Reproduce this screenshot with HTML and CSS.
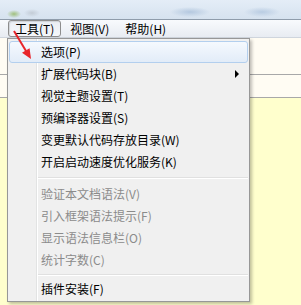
FILE: index.html
```html
<!DOCTYPE html>
<html lang="zh-CN">
<head>
  <meta charset="UTF-8">
  <title>工具菜单</title>
  <link rel="stylesheet" href="styles.css">
</head>
<body>

  <div class="titlebar"></div>

  <div class="menubar">
    <span class="bar-item pressed">工具(T)</span>
    <span class="bar-item">视图(V)</span>
    <span class="bar-item">帮助(H)</span>
  </div>

  <div class="editor">
    <div class="line first"></div>
    <div class="line second"></div>
    <div class="rest"></div>
  </div>

  <!-- 工具メニュー -->
  <div class="menu">
    <div class="item hover">选项(P)</div>
    <div class="item">扩展代码块(B)<span class="sub"></span></div>
    <div class="item">视觉主题设置(T)</div>
    <div class="item">预编译器设置(S)</div>
    <div class="item">变更默认代码存放目录(W)</div>
    <div class="item">开启启动速度优化服务(K)</div>
    <div class="sep"></div>
    <div class="item disabled">验证本文档语法(V)</div>
    <div class="item disabled">引入框架语法提示(F)</div>
    <div class="item disabled">显示语法信息栏(O)</div>
    <div class="item disabled">统计字数(C)</div>
    <div class="sep short"></div>
    <div class="item">插件安装(F)</div>
  </div>

  <svg class="arrow" width="40" height="64" viewBox="0 0 40 64">
    <line x1="14" y1="31" x2="26" y2="51" stroke="#e8262b" stroke-width="2"/>
    <polygon points="31,59 22,52.8 29.6,48.2" fill="#e8262b"/>
  </svg>

</body>
</html>
```

FILE: styles.css
```css
body {
  margin: 0;
  width: 301px;
  height: 305px;
  overflow: hidden;
  position: relative;
  font-family: "Noto Sans CJK SC", "Noto Sans", sans-serif;
  font-size: 12px;
  color: #000;
}

/* ぼかしたタイトルバー */
.titlebar {
  height: 19px;
  border-bottom: 1px solid #8f9cab;
  background:
    radial-gradient(ellipse 7px 4px at 14px 14px, #9fbf7c, transparent),
    radial-gradient(ellipse 8px 4px at 32px 13px, #c3ccd6, transparent),
    radial-gradient(ellipse 20px 5px at 190px 12px, #b4c8df, transparent),
    radial-gradient(ellipse 18px 5px at 262px 12px, #b9cce2, transparent),
    linear-gradient(#e4edf7, #d6e2ef);
}

.menubar {
  height: 17px;
  border-bottom: 1px solid #cfd5dd;
  background: linear-gradient(#f8fafd, #e8ecf2);
  display: flex;
  align-items: center;
  gap: 2px;
  padding-left: 8px;
}

.bar-item {
  height: 15px;
  line-height: 15px;
  padding: 0 6px;
  border: 1px solid transparent;
  border-radius: 3px;
}

.bar-item.pressed {
  border-color: #8d8d8d;
  background: linear-gradient(#e9edf3, #f5f7fa);
  box-shadow: inset 1px 1px 1px rgba(0, 0, 0, 0.12);
}

.editor {
  height: 267px;
  display: flex;
  flex-direction: column;
}

.line {
  background: #fffcf3;
  border-bottom: 1px solid #a8a8a8;
}

.line.first {
  height: 36px;
}

.line.second {
  height: 22px;
}

.rest {
  flex: 1;
  background: #ffffcd;
}

/* ドロップダウン */
.menu {
  position: absolute;
  left: 7px;
  top: 38px;
  width: 241px;
  padding: 2px 0 1px;
  border: 1px solid #979797;
  background:
    linear-gradient(90deg, transparent 28px, #e2e3e3 28px, #e2e3e3 29px, #fff 29px, #fff 30px, transparent 30px),
    #f0f0f0;
  box-shadow: 2px 2px 3px rgba(0, 0, 0, 0.25);
}

.item {
  height: 22px;
  line-height: 22px;
  padding-left: 33px;
  position: relative;
}

.item.hover {
  margin: 0 1px;
  height: 20px;
  line-height: 20px;
  padding-left: 31px;
  border: 1px solid #b3cfee;
  border-radius: 3px;
  background: linear-gradient(#f5f9fe, #e2ecf8);
}

.item.disabled {
  color: #8b8b8b;
}

.sub {
  position: absolute;
  left: 227px;
  top: 7px;
  border-left: 4px solid #000;
  border-top: 4px solid transparent;
  border-bottom: 4px solid transparent;
}

.sep {
  height: 10px;
  margin-left: 30px;
  margin-right: 1px;
  background: linear-gradient(transparent 4px, #e0e0e0 4px, #e0e0e0 5px, #fff 5px, #fff 6px, transparent 6px);
}

.sep.short {
  height: 7px;
  background: linear-gradient(transparent 3px, #e0e0e0 3px, #e0e0e0 4px, #fff 4px, #fff 5px, transparent 5px);
}

.arrow {
  position: absolute;
  left: 0;
  top: 0;
}
```
